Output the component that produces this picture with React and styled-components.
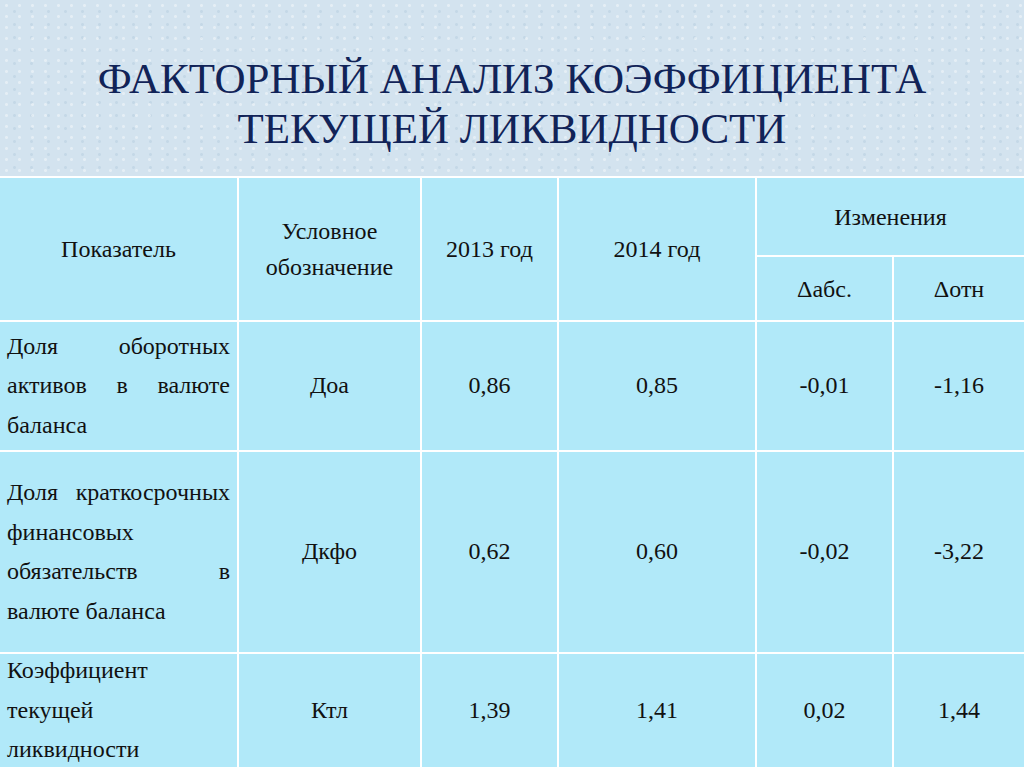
import React from 'react';
import styled, { createGlobalStyle } from 'styled-components';

const GlobalStyle = createGlobalStyle`
  body {
    margin: 0;
    font-family: "Liberation Serif", serif;
  }
`;

const Slide = styled.div`
  width: 1024px;
  font: 24px "Liberation Serif", serif;
`;

const TitleBox = styled.header`
  height: 176px;
  box-sizing: border-box;
  padding-top: 54px;
  text-align: center;
  background-color: #d3e3ef;
  background-image:
    radial-gradient(circle, rgba(255, 255, 255, 0.4) 1px, transparent 2px),
    radial-gradient(circle, rgba(170, 195, 215, 0.35) 1px, transparent 2px);
  background-size: 13px 11px, 17px 13px;
  background-position: 0 0, 6px 5px;
`;

const TitleLine = styled.div`
  font: 43px/50px "Liberation Serif", serif;
  color: #112358;
`;

const Table = styled.div`
  display: grid;
  grid-template-columns: 237px 181px 135px 196px 135px 130px;
  grid-template-rows: 77px 63px 128px 200px 113px;
  gap: 2px;
  background: #ffffff;
  padding-top: 2px;
`;

const Cell = styled.div`
  background: #b1e9f9;
  color: #111111;
  font: 24px/39.5px "Liberation Serif", serif;
  display: flex;
  align-items: center;
  justify-content: ${p => (p.$left ? 'flex-start' : 'center')};
  text-align: center;
  padding: ${p => (p.$left ? '0 7px' : '0 6px')};
  grid-row: ${p => p.$row || 'auto'};
  grid-column: ${p => p.$col || 'auto'};
`;

const HeadCell = styled(Cell)`
  line-height: 36px;
`;

const LabelText = styled.div`
  width: 100%;
  text-align: justify;
`;

const rows = [
  { name: 'Доля оборотных активов в валюте баланса', sym: 'Доа', y13: '0,86', y14: '0,85', abs: '-0,01', rel: '-1,16' },
  { name: 'Доля краткосрочных финансовых обязательств в валюте баланса', sym: 'Дкфо', y13: '0,62', y14: '0,60', abs: '-0,02', rel: '-3,22' },
  { name: 'Коэффициент текущей ликвидности', sym: 'Ктл', y13: '1,39', y14: '1,41', abs: '0,02', rel: '1,44' },
];

export default function App() {
  return (
    <Slide>
      <GlobalStyle />
      <TitleBox>
        <TitleLine>ФАКТОРНЫЙ АНАЛИЗ КОЭФФИЦИЕНТА</TitleLine>
        <TitleLine>ТЕКУЩЕЙ ЛИКВИДНОСТИ</TitleLine>
      </TitleBox>
      <Table>
        <HeadCell $row="1 / 3" $col="1">Показатель</HeadCell>
        <HeadCell $row="1 / 3" $col="2">Условное обозначение</HeadCell>
        <HeadCell $row="1 / 3" $col="3">2013 год</HeadCell>
        <HeadCell $row="1 / 3" $col="4">2014 год</HeadCell>
        <HeadCell $row="1" $col="5 / 7">Изменения</HeadCell>
        <HeadCell $row="2" $col="5">Δабс.</HeadCell>
        <HeadCell $row="2" $col="6">Δотн</HeadCell>
        {rows.map(r => (
          <React.Fragment key={r.sym}>
            <Cell $left>
              <LabelText>{r.name}</LabelText>
            </Cell>
            <Cell>{r.sym}</Cell>
            <Cell>{r.y13}</Cell>
            <Cell>{r.y14}</Cell>
            <Cell>{r.abs}</Cell>
            <Cell>{r.rel}</Cell>
          </React.Fragment>
        ))}
      </Table>
    </Slide>
  );
}
